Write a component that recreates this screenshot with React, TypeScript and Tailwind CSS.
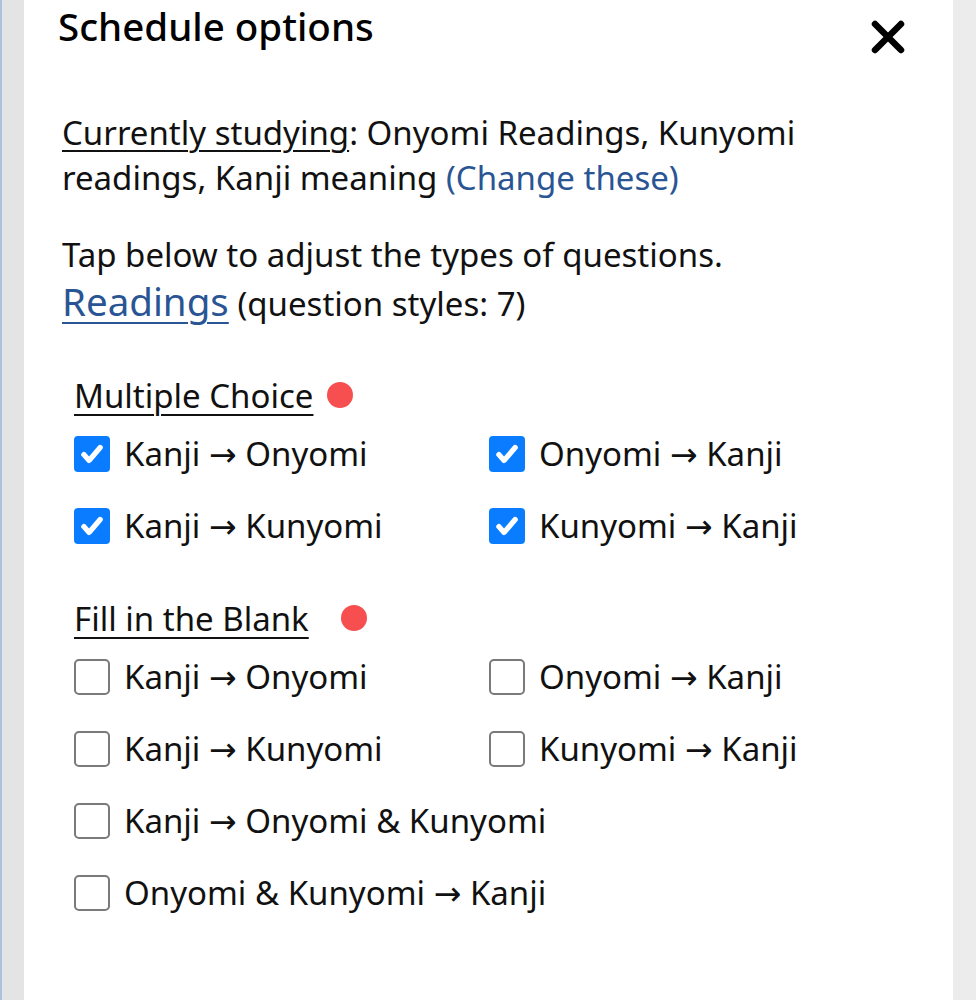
type Opt = { from: string; to: string; checked: boolean };

const multiple: Opt[] = [
  { from: "Kanji", to: "Onyomi", checked: true },
  { from: "Onyomi", to: "Kanji", checked: true },
  { from: "Kanji", to: "Kunyomi", checked: true },
  { from: "Kunyomi", to: "Kanji", checked: true },
];

const fill: Opt[] = [
  { from: "Kanji", to: "Onyomi", checked: false },
  { from: "Onyomi", to: "Kanji", checked: false },
  { from: "Kanji", to: "Kunyomi", checked: false },
  { from: "Kunyomi", to: "Kanji", checked: false },
];

const fillWide: Opt[] = [
  { from: "Kanji", to: "Onyomi & Kunyomi", checked: false },
  { from: "Onyomi & Kunyomi", to: "Kanji", checked: false },
];

function Box({ checked }: { checked: boolean }) {
  if (checked) {
    return (
      <span className="flex h-[36px] w-[36px] shrink-0 items-center justify-center rounded-[4px] bg-[#0a7cff]">
        <svg viewBox="0 0 24 24" className="h-[28px] w-[28px]" fill="none" stroke="white" strokeWidth="4.5" strokeLinecap="round" strokeLinejoin="round">
          <path d="M5 12.5l4.5 5 9.5-11" />
        </svg>
      </span>
    );
  }
  return <span className="h-[36px] w-[36px] shrink-0 rounded-[5px] border-2 border-[#7a7a7a] bg-white" />;
}

function Row({ opt }: { opt: Opt }) {
  return (
    <label className="flex h-[72px] items-center gap-[14px]">
      <Box checked={opt.checked} />
      <span>
        {opt.from} <span style={{ fontFamily: '"DejaVu Sans", sans-serif' }}>→</span> {opt.to}
      </span>
    </label>
  );
}

function Heading({ title, dotGap }: { title: string; dotGap: string }) {
  return (
    <div className="flex h-[46px] items-center">
      <span className="underline underline-offset-[6px] decoration-[2px]">{title}</span>
      <span className={`${dotGap} h-[26px] w-[26px] rounded-full bg-[#f74f4f]`} />
    </div>
  );
}

export default function App() {
  return (
    <div
      className="flex h-[1000px] w-full border-l-[2px] border-[#a9c4dc] bg-gradient-to-r from-[#e4e4e4] to-[#ececec] text-[#111]"
      style={{ fontFamily: '"Noto Sans", "Open Sans", sans-serif' }}
    >
      <div className="ml-[22px] w-[929px] bg-white">
        <div className="flex items-start justify-between pl-[34px] pr-[48px]">
          <h1 className="h-[52px] text-[38.5px] font-medium leading-[52px] text-black">Schedule options</h1>
          <svg viewBox="0 0 34 34" className="mt-[20px] h-[34px] w-[34px]" fill="none" stroke="black" strokeWidth="6.5" strokeLinecap="round">
            <path d="M4 4l26 26M30 4L4 30" />
          </svg>
        </div>

        <div className="px-[38px] pt-[56px] text-[33px] leading-[45px]">
          <p>
            <span className="underline underline-offset-[5px] decoration-[2px]">Currently studying</span>: Onyomi Readings, Kunyomi readings, Kanji meaning{" "}
            <a className="text-[#2a5594]">(Change these)</a>
          </p>

          <p className="mt-[32px]">Tap below to adjust the types of questions.</p>
          <p className="leading-[48px]">
            <a className="text-[38.5px] text-[#2a5594] underline underline-offset-[6px] decoration-[2px]">Readings</a> (question styles: 7)
          </p>

          <div className="mt-[44px] pl-[12px]">
            <Heading title="Multiple Choice" dotGap="ml-[14px]" />
            <div className="grid grid-cols-[415px_1fr]">
              {multiple.map((o, i) => (
                <Row key={i} opt={o} />
              ))}
            </div>

            <div className="mt-[33px]">
              <Heading title="Fill in the Blank" dotGap="ml-[32px]" />
            </div>
            <div className="grid grid-cols-[415px_1fr]">
              {fill.map((o, i) => (
                <Row key={i} opt={o} />
              ))}
            </div>
            {fillWide.map((o, i) => (
              <Row key={i} opt={o} />
            ))}
          </div>
        </div>
      </div>
    </div>
  );
}
